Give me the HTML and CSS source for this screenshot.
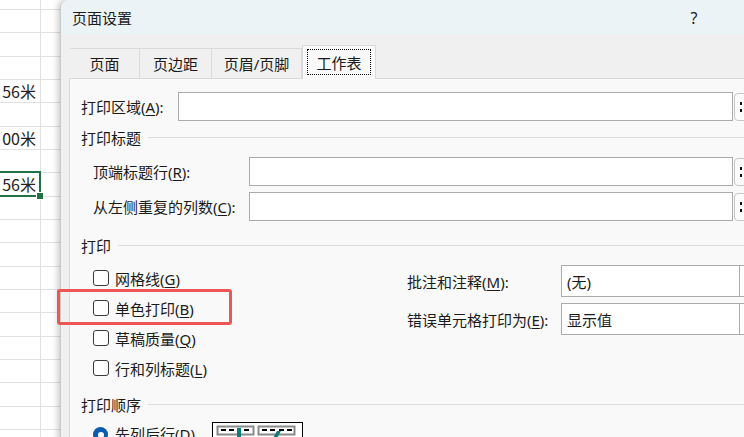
FILE: index.html
```html
<!DOCTYPE html>
<html lang="zh-CN">
<head>
    <meta charset="UTF-8">
    <title>页面设置</title>
    <link rel="stylesheet" href="styles.css">
</head>
<body>
    <div class="screen">
        <div class="sheet">
            <div class="sheet-row first"><div class="cell"></div></div>
            <div class="sheet-row"><div class="cell"></div></div>
            <div class="sheet-row"><div class="cell"></div></div>
            <div class="sheet-row"><div class="cell"></div></div>
            <div class="sheet-row"><div class="cell">56米</div></div>
            <div class="sheet-row"><div class="cell"></div></div>
            <div class="sheet-row"><div class="cell">00米</div></div>
            <div class="sheet-row"><div class="cell"></div></div>
            <div class="sheet-row"><div class="cell selected">56米</div></div>
            <div class="sheet-row"><div class="cell"></div></div>
            <div class="sheet-row"><div class="cell"></div></div>
            <div class="sheet-row"><div class="cell"></div></div>
            <div class="sheet-row"><div class="cell"></div></div>
            <div class="sheet-row"><div class="cell"></div></div>
            <div class="sheet-row"><div class="cell"></div></div>
            <div class="sheet-row"><div class="cell"></div></div>
            <div class="sheet-row"><div class="cell"></div></div>
            <div class="sheet-row"><div class="cell"></div></div>
            <div class="sheet-row"><div class="cell"></div></div>
            <div class="sheet-row"><div class="cell"></div></div>
        </div>

        <div class="dialog">
            <div class="titlebar">
                <span class="title">页面设置</span>
                <span class="help">?</span>
            </div>

            <div class="tabs">
                <div class="tab t1">页面</div>
                <div class="tab t2">页边距</div>
                <div class="tab t3">页眉/页脚</div>
                <div class="tab active"><span class="focus">工作表</span></div>
            </div>

            <div class="panel">
                <div class="field">
                    <label class="lbl-area">打印区域(<u>A</u>):</label>
                    <div class="input"></div>
                    <div class="pick"><i></i><i></i></div>
                </div>

                <div class="group">打印标题</div>

                <div class="field indent">
                    <label class="lbl-title">顶端标题行(<u>R</u>):</label>
                    <div class="input"></div>
                    <div class="pick"><i></i><i></i></div>
                </div>
                <div class="field indent gap">
                    <label class="lbl-title">从左侧重复的列数(<u>C</u>):</label>
                    <div class="input"></div>
                    <div class="pick"><i></i><i></i></div>
                </div>

                <div class="group print-head">打印</div>

                <div class="print">
                    <div class="checks">
                        <div class="check"><span class="box"></span><span>网格线(<u>G</u>)</span></div>
                        <div class="check"><span class="box"></span><span>单色打印(<u>B</u>)</span></div>
                        <div class="check"><span class="box"></span><span>草稿质量(<u>Q</u>)</span></div>
                        <div class="check"><span class="box"></span><span>行和列标题(<u>L</u>)</span></div>
                    </div>
                    <div class="opts">
                        <div class="opt">
                            <label>批注和注释(<u>M</u>):</label>
                            <div class="select"><span>(无)</span><b></b></div>
                        </div>
                        <div class="opt">
                            <label>错误单元格打印为(<u>E</u>):</label>
                            <div class="select"><span>显示值</span><b></b></div>
                        </div>
                    </div>
                </div>

                <div class="group order-head">打印顺序</div>

                <div class="order">
                    <span class="radio"></span>
                    <span class="order-text">先列后行(<u>D</u>)</span>
                    <div class="preview">
                        <svg width="90" height="30" viewBox="0 0 90 30">
                            <rect x="4.5" y="3.5" width="36" height="8" fill="#fff" stroke="#8a8a8a" stroke-width="2"/>
                            <rect x="8" y="6" width="5" height="2" fill="#000"/>
                            <rect x="16" y="6" width="5" height="2" fill="#000"/>
                            <rect x="31" y="6" width="5" height="2" fill="#000"/>
                            <rect x="24" y="5" width="4" height="10" fill="#0e7c7b"/>
                            <rect x="45.5" y="3.5" width="36" height="8" fill="#fff" stroke="#8a8a8a" stroke-width="2"/>
                            <rect x="49" y="6" width="5" height="2" fill="#000"/>
                            <rect x="57" y="6" width="5" height="2" fill="#000"/>
                            <rect x="66" y="6" width="5" height="2" fill="#000"/>
                            <rect x="74" y="6" width="5" height="2" fill="#000"/>
                            <path d="M60 15 L64 8 L68 8 L64 15 Z" fill="#0e7c7b"/>
                        </svg>
                    </div>
                </div>
            </div>
        </div>

        <div class="highlight"></div>
    </div>
</body>
</html>
```

FILE: styles.css
```css
* {
    margin: 0;
    padding: 0;
    box-sizing: border-box;
}

body {
    font-family: "Noto Sans", "Noto Sans CJK SC", sans-serif;
    font-size: 15px;
    color: #1b1b1b;
    background: #fff;
}

u {
    text-decoration-thickness: 1px;
    text-underline-offset: 2px;
}

.screen {
    position: relative;
    width: 744px;
    height: 437px;
    overflow: hidden;
    display: flex;
    align-items: flex-start;
}

/* spreadsheet behind the dialog */
.sheet {
    width: 60px;
    flex: none;
    background: #fff;
}

.sheet-row {
    display: flex;
    height: 23.33px;
    border-bottom: 1px solid #e1e1e1;
}

.sheet-row.first {
    height: 10px;
}

.cell {
    width: 41px;
    border-right: 1px solid #e1e1e1;
    text-align: right;
    padding-right: 4px;
    font-family: "Noto Sans CJK SC", sans-serif;
    font-size: 16px;
    line-height: 22px;
    color: #222;
    white-space: nowrap;
}

.cell.selected {
    position: relative;
}

.cell.selected::after {
    content: "";
    position: absolute;
    left: -3px;
    top: -2px;
    right: -1px;
    bottom: -1px;
    border: 2px solid #217346;
}

.cell.selected::before {
    content: "";
    position: absolute;
    right: -4px;
    bottom: -4px;
    width: 6px;
    height: 6px;
    background: #217346;
    border: 1px solid #fff;
    z-index: 1;
}

/* dialog */
.dialog {
    width: 720px;
    height: 470px;
    flex: none;
    display: flex;
    flex-direction: column;
    background: #f0f0f0;
    border-left: 1px solid #c9c9c9;
    border-radius: 8px 8px 0 0;
    box-shadow: -2px 0 6px rgba(0, 0, 0, 0.22);
}

.titlebar {
    height: 35px;
    flex: none;
    display: flex;
    align-items: center;
    padding-left: 11px;
    background: #ebf3f6;
    border-radius: 8px 8px 0 0;
}

.help {
    margin-left: auto;
    margin-right: 66px;
    width: 40px;
    text-align: center;
    font-size: 16px;
}

.tabs {
    height: 43px;
    flex: none;
    display: flex;
    align-items: flex-end;
    padding-left: 9px;
}

.tab {
    height: 30px;
    display: flex;
    align-items: center;
    justify-content: center;
    border-top: 1px solid #dadada;
    border-right: 1px solid #dadada;
}

.t1 { width: 70px; }
.t2 { width: 72px; }
.t3 { width: 90px; }

.tab.active {
    width: 74px;
    height: 34px;
    align-items: flex-start;
    background: #f9f9f9;
    border: 1px solid #dadada;
    border-bottom: none;
    margin-bottom: -1px;
    position: relative;
    z-index: 1;
}

.focus {
    display: flex;
    align-items: center;
    justify-content: center;
    width: 64px;
    height: 26px;
    margin-top: 3px;
    border: 1px dotted #000;
}

.panel {
    width: 700px;
    flex: 1;
    margin-left: 8px;
    padding: 13px 19px 0 11px;
    background: #f9f9f9;
    border: 1px solid #dadada;
}

.field {
    display: flex;
    align-items: center;
    height: 29px;
}

.field.gap {
    margin-top: 6px;
}

.lbl-area {
    width: 97px;
    flex: none;
}

.lbl-title {
    width: 156px;
    flex: none;
    margin-left: 12px;
}

.input {
    flex: 1;
    height: 29px;
    background: #fff;
    border: 1px solid #ababab;
}

.pick {
    width: 15px;
    height: 28px;
    flex: none;
    margin-left: 1px;
    display: flex;
    flex-direction: column;
    justify-content: center;
    gap: 4px;
    padding-left: 5px;
    background: #fbfbfb;
    border: 1px solid #c6c6c6;
    border-radius: 4px;
}

.pick i {
    display: block;
    width: 2px;
    height: 3px;
    background: #111;
}

.group {
    display: flex;
    align-items: center;
    height: 20px;
    margin: 6px -19px 10px 0;
}

.group::after {
    content: "";
    flex: 1;
    height: 1px;
    margin-left: 7px;
    background: #dcdcdc;
}

.print-head {
    margin-top: 14px;
    margin-bottom: 8px;
}

.print {
    display: flex;
}

.checks {
    width: 326px;
    flex: none;
    padding-left: 12px;
}

.check {
    display: flex;
    align-items: center;
    gap: 6px;
    height: 30px;
}

.box {
    width: 16px;
    height: 16px;
    background: #fff;
    border: 1px solid #3a3a3a;
    border-radius: 3px;
}

.opts {
    margin-top: 2px;
}

.opt {
    display: flex;
    align-items: center;
    height: 32px;
    margin-bottom: 6px;
}

.opt label {
    width: 154px;
    flex: none;
}

.select {
    width: 196px;
    height: 32px;
    display: flex;
    align-items: center;
    background: #fff;
    border: 1px solid #ababab;
}

.select span {
    flex: 1;
    padding-left: 5px;
}

.select b {
    width: 17px;
    height: 100%;
    border-left: 1px solid #ababab;
}

.order-head {
    margin-top: 11px;
    margin-bottom: 5px;
}

.order {
    display: flex;
    align-items: flex-start;
    height: 30px;
    padding-left: 12px;
}

.radio {
    width: 15px;
    height: 15px;
    margin-top: 8px;
    border-radius: 50%;
    background: #0b5cad;
    display: flex;
    align-items: center;
    justify-content: center;
}

.radio::after {
    content: "";
    width: 6px;
    height: 6px;
    border-radius: 50%;
    background: #fff;
}

.order-text {
    width: 97px;
    margin-left: 7px;
    line-height: 30px;
}

.preview {
    width: 91px;
    height: 40px;
    margin-top: 3px;
    background: #fff;
    border: 1px solid #000;
}

.preview svg {
    display: block;
}

/* red annotation box */
.highlight {
    position: absolute;
    left: 57px;
    top: 289px;
    width: 175px;
    height: 36px;
    border: 3px solid #ee5555;
    border-radius: 3px;
}
```
